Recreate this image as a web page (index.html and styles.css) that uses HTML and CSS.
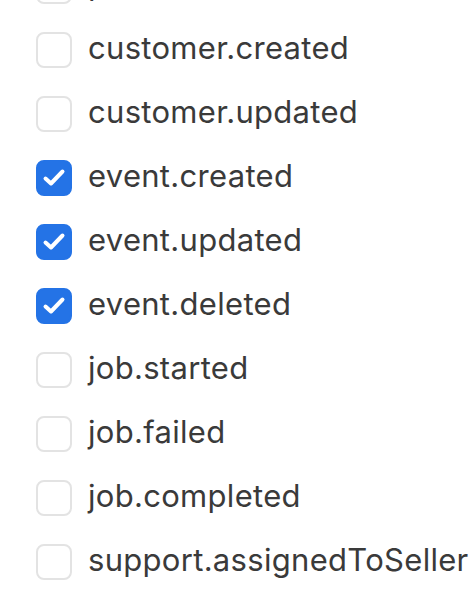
FILE: index.html
```html
<!DOCTYPE html>
<html lang="en">
<head>
  <meta charset="UTF-8" />
  <title>Webhook events</title>
  <link rel="stylesheet" href="styles.css">
</head>
<body>

<ul class="event-list">
  <li class="event-row">
    <span class="check"></span>
    <span class="event-name">product.created</span>
  </li>
  <li class="event-row">
    <span class="check"></span>
    <span class="event-name">customer.created</span>
  </li>
  <li class="event-row">
    <span class="check"></span>
    <span class="event-name">customer.updated</span>
  </li>
  <li class="event-row">
    <span class="check checked">
      <svg viewBox="0 0 36 36"><path d="M9.5 18.5l5.5 5 11.5-12" /></svg>
    </span>
    <span class="event-name">event.created</span>
  </li>
  <li class="event-row">
    <span class="check checked">
      <svg viewBox="0 0 36 36"><path d="M9.5 18.5l5.5 5 11.5-12" /></svg>
    </span>
    <span class="event-name">event.updated</span>
  </li>
  <li class="event-row">
    <span class="check checked">
      <svg viewBox="0 0 36 36"><path d="M9.5 18.5l5.5 5 11.5-12" /></svg>
    </span>
    <span class="event-name">event.deleted</span>
  </li>
  <li class="event-row">
    <span class="check"></span>
    <span class="event-name">job.started</span>
  </li>
  <li class="event-row">
    <span class="check"></span>
    <span class="event-name">job.failed</span>
  </li>
  <li class="event-row">
    <span class="check"></span>
    <span class="event-name">job.completed</span>
  </li>
  <li class="event-row">
    <span class="check"></span>
    <span class="event-name">support.assignedToSeller</span>
  </li>
</ul>

</body>
</html>
```

FILE: styles.css
```css
body {
  margin: 0;
  padding: 0;
  background-color: #fff;
  font-family: Inter, "Noto Sans", sans-serif;
  overflow: hidden;
}
.event-list {
  list-style: none;
  margin: -46px 0 0 0;
  padding: 0 0 0 36px;
}
.event-row {
  display: flex;
  align-items: center;
  gap: 16px;
  height: 64px;
}
/* Checkbox */
.check {
  flex: none;
  position: relative;
  width: 36px;
  height: 36px;
  box-sizing: border-box;
  border: 2px solid #e3e3e3;
  border-radius: 8px;
  background: #fff;
}
.check.checked {
  background: #2473e6;
  border-color: #2473e6;
}
.check svg {
  position: absolute;
  top: -2px;
  left: -2px;
  width: 36px;
  height: 36px;
  fill: none;
  stroke: #fff;
  stroke-width: 4;
  stroke-linecap: round;
  stroke-linejoin: round;
}
.event-name {
  font-size: 31px;
  letter-spacing: 0.3px;
  color: #3a3a3a;
  white-space: nowrap;
  margin-bottom: 5px;
}
```
